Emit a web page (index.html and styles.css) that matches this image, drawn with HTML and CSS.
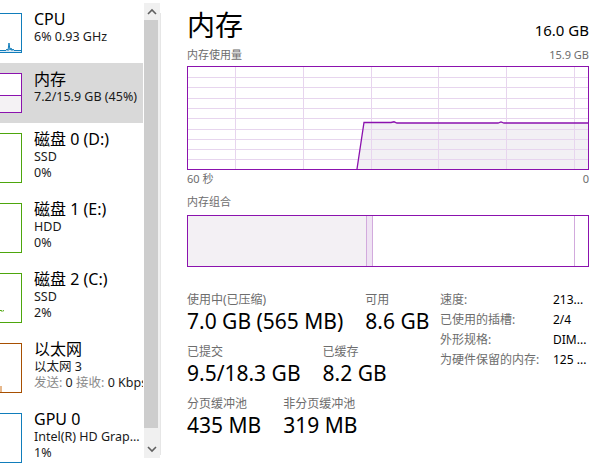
FILE: index.html
```html
<!DOCTYPE html>
<html lang="zh-CN">
<head>
<meta charset="utf-8">
<title>任务管理器 - 性能</title>
<link rel="stylesheet" href="styles.css">
</head>
<body>
<div class="app">
  <aside class="side">
    <div class="tiles">
      <div class="tile">
        <div class="thumb cpu">
          <svg width="21" height="38" viewBox="0 0 21 38">
            <path class="cpu-fill" d="M0 38 L0 36.5 L6 36.5 L7 35 L8 36.5 L9 29 L10 36 L11 34 L12 36.5 L13 35 L14 36.5 L21 36.5 L21 38 Z"/>
            <path class="cpu-line" d="M0 36.5 L6 36.5 L7 35 L8 36.5 L9 29 L10 36 L11 34 L12 36.5 L13 35 L14 36.5 L21 36.5"/>
          </svg>
        </div>
        <div class="info">
          <div class="name">CPU</div>
          <div class="sub">6% 0.93 GHz</div>
        </div>
      </div>
      <div class="tile sel">
        <div class="thumb mem">
          <svg width="21" height="38" viewBox="0 0 21 38">
            <rect class="mem-fill" x="0" y="21" width="21" height="17"/>
            <line class="mem-line" x1="0" y1="21.5" x2="21" y2="21.5"/>
          </svg>
        </div>
        <div class="info">
          <div class="name">内存</div>
          <div class="sub">7.2/15.9 GB (45%)</div>
        </div>
      </div>
      <div class="tile tall">
        <div class="thumb disk"></div>
        <div class="info">
          <div class="name">磁盘 0 (D:)</div>
          <div class="sub">SSD</div>
          <div class="sub">0%</div>
        </div>
      </div>
      <div class="tile tall">
        <div class="thumb disk"></div>
        <div class="info">
          <div class="name">磁盘 1 (E:)</div>
          <div class="sub">HDD</div>
          <div class="sub">0%</div>
        </div>
      </div>
      <div class="tile tall">
        <div class="thumb disk">
          <svg width="21" height="48" viewBox="0 0 21 48">
            <path class="disk-line" d="M0 37 L1 36 L2 37.5 L3 36.5 L4 37"/>
          </svg>
        </div>
        <div class="info">
          <div class="name">磁盘 2 (C:)</div>
          <div class="sub">SSD</div>
          <div class="sub">2%</div>
        </div>
      </div>
      <div class="tile tall">
        <div class="thumb eth">
          <svg width="21" height="48" viewBox="0 0 21 48">
            <rect class="eth-fill" x="0" y="42" width="2" height="6"/>
          </svg>
        </div>
        <div class="info">
          <div class="name">以太网</div>
          <div class="sub">以太网 3</div>
          <div class="sub"><span class="muted">发送:</span> 0 <span class="muted">接收:</span> 0 Kbps</div>
        </div>
      </div>
      <div class="tile tall">
        <div class="thumb gpu"></div>
        <div class="info">
          <div class="name">GPU 0</div>
          <div class="sub">Intel(R) HD Grap...</div>
          <div class="sub">1%</div>
        </div>
      </div>
    </div>
    <div class="scroll">
      <div class="sb-btn">
        <svg width="12" height="10" viewBox="0 0 12 10"><polyline class="chev" points="2,7 6,3 10,7"/></svg>
      </div>
      <div class="sb-thumb"></div>
      <div class="sb-btn sb-down">
        <svg width="12" height="10" viewBox="0 0 12 10"><polyline class="chev" points="2,3 6,7 10,3"/></svg>
      </div>
    </div>
    <div class="split"></div>
  </aside>

  <main class="main">
    <div class="head">
      <div class="title">内存</div>
      <div class="total">16.0 GB</div>
    </div>
    <div class="cap-row">
      <span>内存使用量</span>
      <span>15.9 GB</span>
    </div>
    <svg class="graph" width="402" height="104" viewBox="0 0 402 104">
      <path class="g-fill" d="M170 103 L177 56.5 L204 56.5 L207 55.8 L210 57 L311 57 L314 56 L317 57 L401 57 L401 103 Z"/>
      <g class="grid">
        <line x1="1" y1="11.5" x2="401" y2="11.5"/>
        <line x1="1" y1="21.5" x2="401" y2="21.5"/>
        <line x1="1" y1="32.5" x2="401" y2="32.5"/>
        <line x1="1" y1="42.5" x2="401" y2="42.5"/>
        <line x1="1" y1="52.5" x2="401" y2="52.5"/>
        <line x1="1" y1="63.5" x2="401" y2="63.5"/>
        <line x1="1" y1="73.5" x2="401" y2="73.5"/>
        <line x1="1" y1="83.5" x2="401" y2="83.5"/>
        <line x1="1" y1="93.5" x2="401" y2="93.5"/>
        <line x1="48.5" y1="1" x2="48.5" y2="103"/>
        <line x1="116.5" y1="1" x2="116.5" y2="103"/>
        <line x1="184.5" y1="1" x2="184.5" y2="103"/>
        <line x1="251.5" y1="1" x2="251.5" y2="103"/>
        <line x1="319.5" y1="1" x2="319.5" y2="103"/>
        <line x1="387.5" y1="1" x2="387.5" y2="103"/>
      </g>
      <path class="g-line" d="M170 103 L177 56.5 L204 56.5 L207 55.8 L210 57 L311 57 L314 56 L317 57 L401 57"/>
      <rect class="g-border" x="0.5" y="0.5" width="401" height="103"/>
    </svg>
    <div class="cap-row axis">
      <span>60 秒</span>
      <span>0</span>
    </div>
    <div class="cap-row comp-label">
      <span>内存组合</span>
    </div>
    <svg class="comp" width="402" height="52" viewBox="0 0 402 52">
      <rect class="c-used" x="1" y="1" width="178" height="50"/>
      <rect class="c-mod" x="179" y="1" width="6" height="50"/>
      <line class="c-sep" x1="179.5" y1="1" x2="179.5" y2="51"/>
      <line class="c-sep" x1="185.5" y1="1" x2="185.5" y2="51"/>
      <line class="c-sep" x1="387.5" y1="1" x2="387.5" y2="51"/>
      <rect class="g-border" x="0.5" y="0.5" width="401" height="51"/>
    </svg>

    <div class="stats">
      <div class="left">
        <div class="srow">
          <div class="stat"><div class="slabel">使用中(已压缩)</div><div class="sval">7.0 GB (565 MB)</div></div>
          <div class="stat"><div class="slabel">可用</div><div class="sval">8.6 GB</div></div>
        </div>
        <div class="srow">
          <div class="stat"><div class="slabel">已提交</div><div class="sval">9.5/18.3 GB</div></div>
          <div class="stat"><div class="slabel">已缓存</div><div class="sval">8.2 GB</div></div>
        </div>
        <div class="srow">
          <div class="stat"><div class="slabel">分页缓冲池</div><div class="sval">435 MB</div></div>
          <div class="stat"><div class="slabel">非分页缓冲池</div><div class="sval">319 MB</div></div>
        </div>
      </div>
      <div class="right">
        <div class="kv"><span class="k">速度:</span><span class="v">213...</span></div>
        <div class="kv"><span class="k">已使用的插槽:</span><span class="v">2/4</span></div>
        <div class="kv"><span class="k">外形规格:</span><span class="v">DIM...</span></div>
        <div class="kv"><span class="k">为硬件保留的内存:</span><span class="v">125 ...</span></div>
      </div>
    </div>
  </main>
</div>
</body>
</html>
```

FILE: styles.css
```css
* { box-sizing: border-box; }
html, body { margin: 0; padding: 0; background: #fff; }
body {
  width: 600px;
  height: 466px;
  overflow: hidden;
  font-family: "Noto Sans", "Noto Sans CJK SC", sans-serif;
  color: #000;
}
.app { display: flex; height: 466px; }

/* sidebar */
.side { display: flex; width: 161px; flex: none; padding-top: 3px; align-items: flex-start; }
.tiles { width: 143px; flex: none; }
.tile { display: flex; height: 60px; padding-top: 10px; }
.tile.tall { height: 70px; }
.tile.sel { background: #d9d9d9; }
.thumb {
  width: 22px;
  height: 40px;
  flex: none;
  border: 1px solid #117dbb;
  border-left: 0;
  background: #fff;
}
.tall .thumb { height: 50px; }
.thumb svg { display: block; }
.thumb.cpu, .thumb.gpu { border-color: #117dbb; }
.thumb.mem { border-color: #8b12ae; }
.thumb.disk { border-color: #4da60c; }
.thumb.eth { border-color: #a74f01; }
.cpu-fill { fill: #dbeaf5; }
.cpu-line { fill: none; stroke: #117dbb; stroke-width: 1; }
.mem-fill { fill: #f4f2f4; }
.mem-line { stroke: #8b12ae; stroke-width: 1; }
.disk-line { fill: none; stroke: #4da60c; stroke-width: 1; }
.eth-fill { fill: #e7b88c; }

.info {
  flex: 1;
  min-width: 0;
  margin-left: 12px;
  margin-top: -4px;
  overflow: hidden;
  white-space: nowrap;
}
.name { font-size: 16px; line-height: 20px; }
.sub { font-size: 12.5px; line-height: 16px; color: #1a1a1a; }
.muted { color: #8a8a8a; }

.scroll {
  width: 16px;
  flex: none;
  margin-left: 1px;
  height: 455px;
  background: #f0f0f0;
  display: flex;
  flex-direction: column;
}
.sb-btn { height: 17px; display: flex; align-items: center; justify-content: center; flex: none; }
.sb-btn svg { display: block; }
.sb-down { flex: 1; align-items: flex-end; padding-bottom: 4px; }
.chev { fill: none; stroke: #606060; stroke-width: 1.6; }
.sb-thumb { height: 408px; background: #cdcdcd; margin-right: 2px; flex: none; }
.split { width: 1px; flex: none; margin-top: 10px; height: 442px; background: #e6e6e6; }

/* main pane */
.main { flex: 1; min-width: 0; padding: 7px 11px 0 26px; }
.head { display: flex; justify-content: space-between; align-items: baseline; height: 36px; }
.title { font-size: 28px; line-height: 36px; }
.total { font-size: 15px; line-height: 20px; }
.cap-row {
  display: flex;
  justify-content: space-between;
  font-size: 11px;
  line-height: 14px;
  color: #6d6d6d;
  margin-top: 5px;
}
.graph { display: block; margin-top: 4px; }
.g-fill { fill: #f2f0f4; }
.grid line { stroke: #e7d5ee; stroke-width: 1; }
.g-line { fill: none; stroke: #8b12ae; stroke-width: 1.3; }
.g-border { fill: none; stroke: #8b12ae; stroke-width: 1; }
.axis { margin-top: 2px; }
.comp-label { margin-top: 9px; }
.comp { display: block; margin-top: 6px; }
.c-used { fill: #f3f0f4; }
.c-mod { fill: #efe3f3; }
.c-sep { stroke: #d2aadd; stroke-width: 1; }

.stats { display: flex; margin-top: 23px; }
.left { width: 253px; flex: none; padding-top: 2px; }
.srow { display: flex; gap: 22px; margin-bottom: 10px; }
.slabel { font-size: 12px; line-height: 16px; color: #6d6d6d; white-space: nowrap; }
.sval { font-size: 21px; line-height: 26px; white-space: nowrap; }
.right { width: 149px; flex: none; font-size: 12px; line-height: 20px; }
.kv { display: flex; }
.k { width: 113px; flex: none; color: #6d6d6d; white-space: nowrap; }
.v { flex: 1; min-width: 0; white-space: nowrap; }
```
